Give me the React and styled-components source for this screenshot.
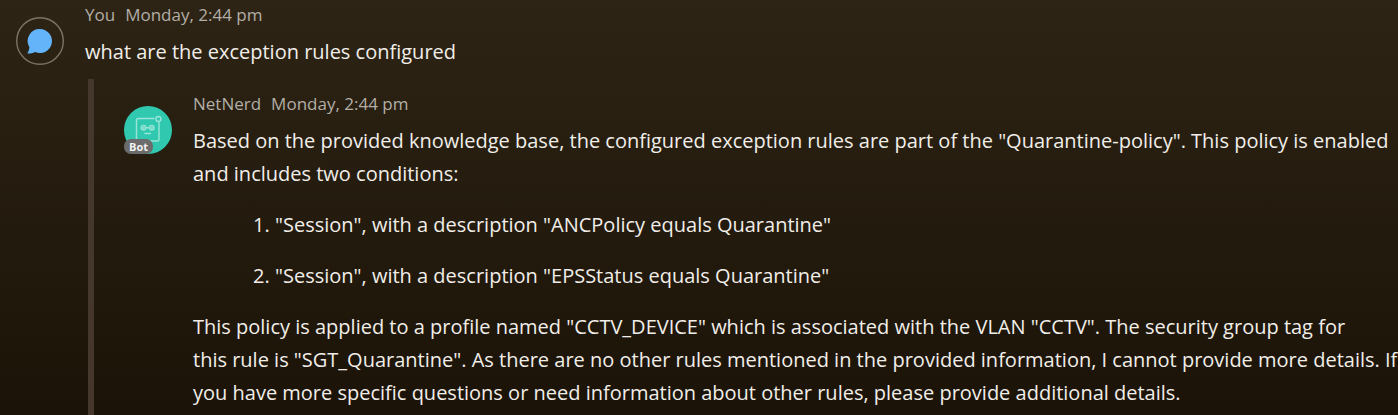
import React from "react";
import styled, { createGlobalStyle } from "styled-components";

const GlobalStyle = createGlobalStyle`
  html {
    min-height: 100%;
    background: linear-gradient(#2d2415, #1b1307);
  }
  body {
    margin: 0;
    font-family: "Segoe UI", "Open Sans", "Noto Sans", sans-serif;
  }
`;

const Conversation = styled.main`
  padding: 3px 0 0 16px;
  color: #f1eee9;
`;

const Message = styled.article`
  display: flex;
  gap: 21px;
`;

const Avatar = styled.div`
  position: relative;
  flex: none;
  width: 48px;
  height: 48px;
  margin-top: 14px;

  svg {
    display: block;
  }
`;

const BotBadge = styled.span`
  position: absolute;
  left: 0;
  bottom: 0;
  padding: 0 5px;
  border-radius: 7px;
  background: #6b6b6b;
  color: #f2f2f2;
  font-size: 11px;
  font-weight: 700;
  line-height: 15px;
`;

const Content = styled.div`
  flex: 1;
  min-width: 0;
`;

const Meta = styled.header`
  display: flex;
  gap: 10px;
  margin-bottom: 8px;
  color: #b3aea6;
  font-size: 17px;
  line-height: 24px;
`;

const Text = styled.p`
  margin: 0;
  font-size: 20px;
  line-height: 33px;
`;

const Rules = styled.ol`
  margin: 18px 0;
  padding-left: 82px;
  font-size: 20px;
  line-height: 33px;

  li + li {
    margin-top: 18px;
  }
`;

const Thread = styled.section`
  margin: 11px 0 0 72px;
  padding: 13px 0 8px 30px;
  border-left: 6px solid #45372c;
`;

const UserIcon = () => (
  <svg width="48" height="48" viewBox="0 0 48 48" aria-hidden="true">
    <circle cx="24" cy="24" r="23.3" fill="none" stroke="#7d7366" strokeWidth="1.4" />
    <path
      d="M24 12a12 12 0 1 1-4.800 23c-2.200 1-4.900 1.500-7.100 1.500-.6 0-.8-.5-.4-1 1-1.300 1.500-3.200 1.700-5.300A12 12 0 0 1 24 12Z"
      fill="#64b4fa"
    />
  </svg>
);

const BotIcon = () => (
  <svg width="48" height="48" viewBox="0 0 48 48" aria-hidden="true">
    <circle cx="24" cy="24" r="24" fill="#30c9b0" />
    <g fill="none" stroke="#98e4d7" strokeWidth="1.400" strokeLinecap="round">
      <path d="M30 12.500H14.500a2 2 0 0 0-2 2v18.500a2 2 0 0 0 2 2H33a2 2 0 0 0 2-2V16.500" />
      <circle cx="34.400" cy="13" r="2.500" />
      <circle cx="19.500" cy="21.700" r="2.300" />
      <circle cx="27.700" cy="21.700" r="2.300" />
      <path d="M21.800 21.700h3.600M21 27.500h5.500" />
      <circle cx="19.500" cy="21.700" r=".5" />
      <circle cx="27.700" cy="21.700" r=".5" />
    </g>
  </svg>
);

export default function App() {
  return (
    <>
      <GlobalStyle />
      <Conversation>
        <Message>
          <Avatar>
            <UserIcon />
          </Avatar>
          <Content>
            <Meta>
              <span>You</span>
              <time>Monday, 2:44 pm</time>
            </Meta>
            <Text>what are the exception rules configured</Text>
          </Content>
        </Message>
        <Thread>
          <Message>
            <Avatar>
              <BotIcon />
              <BotBadge>Bot</BotBadge>
            </Avatar>
            <Content>
              <Meta>
                <span>NetNerd</span>
                <time>Monday, 2:44 pm</time>
              </Meta>
              <Text>
                Based on the provided knowledge base, the configured exception rules are part of the
                "Quarantine-policy". This policy is enabled and includes two conditions:
              </Text>
              <Rules>
                <li>"Session", with a description "ANCPolicy equals Quarantine"</li>
                <li>"Session", with a description "EPSStatus equals Quarantine"</li>
              </Rules>
              <Text>
                This policy is applied to a profile named "CCTV_DEVICE" which is associated with the
                VLAN "CCTV". The security group tag for
                <br />
                this rule is "SGT_Quarantine". As there are no other rules mentioned in the provided
                information, I cannot provide more details. If you have more specific questions or
                need information about other rules, please provide additional details.
              </Text>
            </Content>
          </Message>
        </Thread>
      </Conversation>
    </>
  );
}
